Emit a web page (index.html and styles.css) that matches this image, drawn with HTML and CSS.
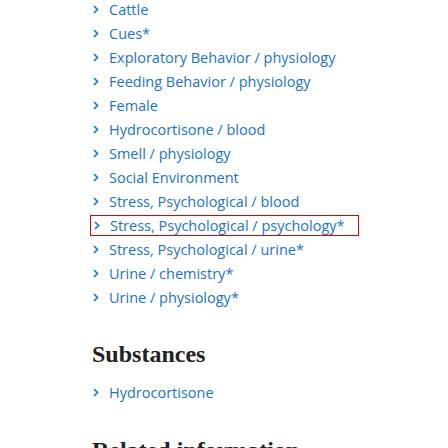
FILE: index.html
```html
<!DOCTYPE html>
<html>
<head>
<meta charset="utf-8">
<link rel="stylesheet" href="styles.css">
</head>
<body>
<div class="page">
  <ul class="terms">
    <li class="term"><svg class="chev" viewBox="0 0 6 9"><polyline points="1,1 4.5,4.5 1,8"/></svg><a>Cattle</a></li>
    <li class="term"><svg class="chev" viewBox="0 0 6 9"><polyline points="1,1 4.5,4.5 1,8"/></svg><a>Cues*</a></li>
    <li class="term"><svg class="chev" viewBox="0 0 6 9"><polyline points="1,1 4.5,4.5 1,8"/></svg><a>Exploratory Behavior / physiology</a></li>
    <li class="term"><svg class="chev" viewBox="0 0 6 9"><polyline points="1,1 4.5,4.5 1,8"/></svg><a>Feeding Behavior / physiology</a></li>
    <li class="term"><svg class="chev" viewBox="0 0 6 9"><polyline points="1,1 4.5,4.5 1,8"/></svg><a>Female</a></li>
    <li class="term"><svg class="chev" viewBox="0 0 6 9"><polyline points="1,1 4.5,4.5 1,8"/></svg><a>Hydrocortisone / blood</a></li>
    <li class="term"><svg class="chev" viewBox="0 0 6 9"><polyline points="1,1 4.5,4.5 1,8"/></svg><a>Smell / physiology</a></li>
    <li class="term"><svg class="chev" viewBox="0 0 6 9"><polyline points="1,1 4.5,4.5 1,8"/></svg><a>Social Environment</a></li>
    <li class="term"><svg class="chev" viewBox="0 0 6 9"><polyline points="1,1 4.5,4.5 1,8"/></svg><a>Stress, Psychological / blood</a></li>
    <li class="term"><span class="focused"><svg class="chev" viewBox="0 0 6 9"><polyline points="1,1 4.5,4.5 1,8"/></svg><a>Stress, Psychological / psychology*</a></span></li>
    <li class="term"><svg class="chev" viewBox="0 0 6 9"><polyline points="1,1 4.5,4.5 1,8"/></svg><a>Stress, Psychological / urine*</a></li>
    <li class="term"><svg class="chev" viewBox="0 0 6 9"><polyline points="1,1 4.5,4.5 1,8"/></svg><a>Urine / chemistry*</a></li>
    <li class="term"><svg class="chev" viewBox="0 0 6 9"><polyline points="1,1 4.5,4.5 1,8"/></svg><a>Urine / physiology*</a></li>
  </ul>
  <h2 class="heading">Substances</h2>
  <ul class="terms">
    <li class="term"><svg class="chev" viewBox="0 0 6 9"><polyline points="1,1 4.5,4.5 1,8"/></svg><a>Hydrocortisone</a></li>
  </ul>
  <h2 class="heading heading-later">Related information</h2>
</div>
</body>
</html>
```
FILE: styles.css
```css
html, body {
  margin: 0;
  padding: 0;
  background: #fff;
}
.page {
  padding-left: 92px;
  margin-top: -3px;
}
.terms {
  list-style: none;
  margin: 0;
  padding: 0;
}
.term {
  display: flex;
  align-items: center;
  height: 24px;
  font-family: "Open Sans", sans-serif;
  font-size: 14.5px;
  color: #1a73c9;
}
.term a {
  color: #1a73c9;
}
.chev {
  width: 6px;
  height: 9px;
  margin: 0 10px 0 1px;
  flex: none;
  fill: none;
  stroke: #1a73c9;
  stroke-width: 1.6;
}
.focused {
  display: flex;
  align-items: center;
  width: 265px;
  height: 19px;
  margin-left: -2px;
  padding-left: 2px;
  border: 1px solid #e00000;
}
.heading {
  font-family: "Liberation Serif", serif;
  font-weight: bold;
  font-size: 24px;
  color: #222;
  margin: 32px 0 12px;
}
.heading-later {
  margin-top: 33px;
}
```
